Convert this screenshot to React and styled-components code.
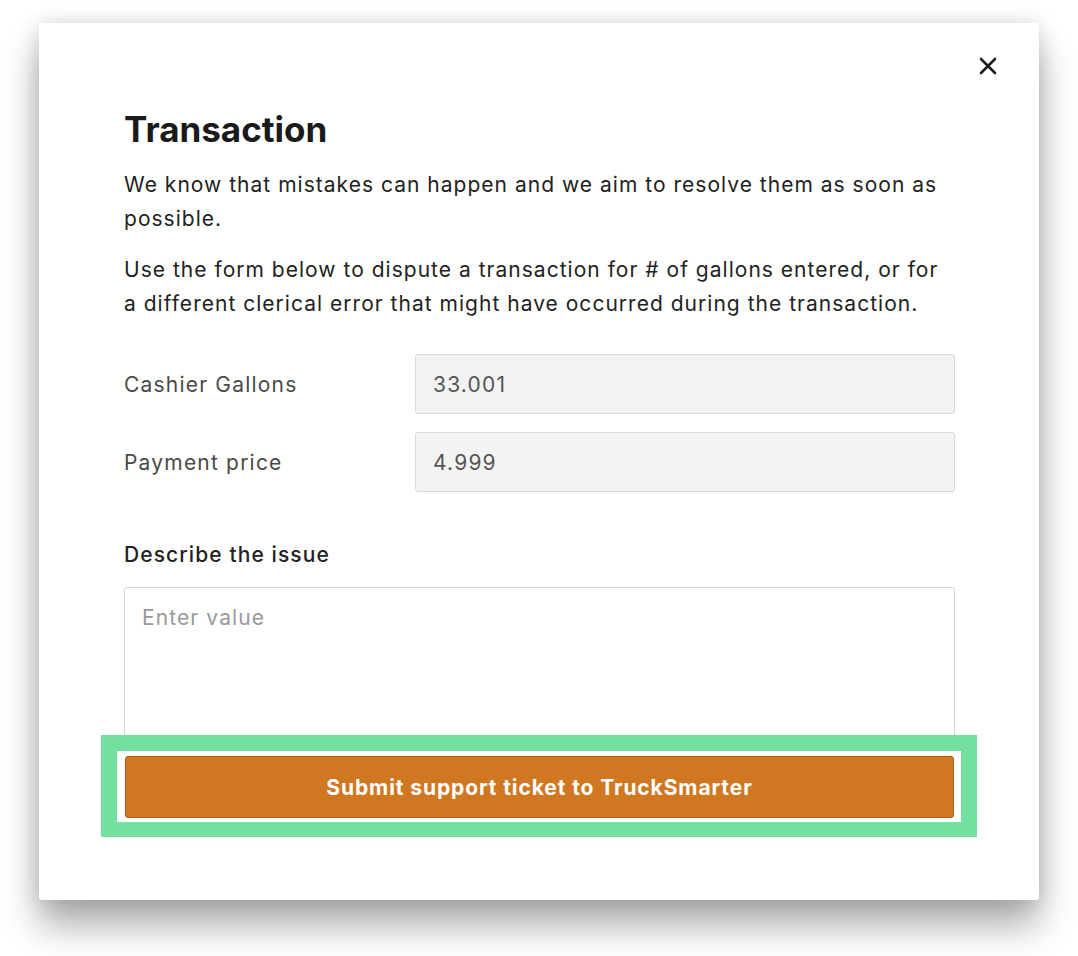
import React from "react";
import styled, { createGlobalStyle } from "styled-components";

const GlobalStyle = createGlobalStyle`
  html, body {
    margin: 0;
    padding: 0;
    background: #ffffff;
  }
  body {
    font-family: Inter, "Noto Sans", sans-serif;
    -webkit-font-smoothing: antialiased;
  }
`;

const App = () => {
  return (
    <>
      <GlobalStyle />
      <Page>
        <Modal>
          <CloseButton aria-label="Close">
            <svg width="20" height="20" viewBox="0 0 20 20">
              <path
                d="M3 3 L17 17 M17 3 L3 17"
                stroke="#1c1c1c"
                strokeWidth="2.6"
                strokeLinecap="round"
              />
            </svg>
          </CloseButton>

          <Title>Transaction</Title>
          <Paragraph>
            We know that mistakes can happen and we aim to resolve them as soon
            as possible.
          </Paragraph>
          <Paragraph>
            Use the form below to dispute a transaction for # of gallons
            entered, or for a different clerical error that might have occurred
            during the transaction.
          </Paragraph>

          <Fields>
            <FieldRow>
              <FieldLabel>Cashier Gallons</FieldLabel>
              <ReadOnlyInput value="33.001" readOnly />
            </FieldRow>
            <FieldRow>
              <FieldLabel>Payment price</FieldLabel>
              <ReadOnlyInput value="4.999" readOnly />
            </FieldRow>
          </Fields>

          <IssueLabel>Describe the issue</IssueLabel>
          <IssueInput placeholder="Enter value" />

          {/* green annotation around the submit button */}
          <Highlight>
            <SubmitButton>Submit support ticket to TruckSmarter</SubmitButton>
          </Highlight>
        </Modal>
      </Page>
    </>
  );
};

// Styled Components
const Page = styled.div`
  width: 1078px;
  height: 956px;
  padding: 23px 0 0 39px;
  box-sizing: border-box;
  overflow: hidden;
`;

const Modal = styled.div`
  position: relative;
  width: 1000px;
  height: 877px;
  box-sizing: border-box;
  padding: 86px 84px 0 85px;
  background: #ffffff;
  border-radius: 3px;
  box-shadow: 0 26px 36px rgba(0, 0, 0, 0.32), 0 0 22px rgba(0, 0, 0, 0.14);
  display: flex;
  flex-direction: column;
`;

const CloseButton = styled.button`
  position: absolute;
  top: 33px;
  right: 41px;
  width: 20px;
  height: 20px;
  padding: 0;
  border: none;
  background: none;
  display: flex;
`;

const Title = styled.h1`
  margin: 0 0 19px;
  font-size: 35px;
  line-height: 40px;
  font-weight: 700;
  color: #1a1a1a;
`;

const Paragraph = styled.p`
  margin: 0 0 17px;
  font-size: 21px;
  line-height: 34px;
  letter-spacing: 1.02px;
  color: #222222;
`;

const Fields = styled.div`
  display: flex;
  flex-direction: column;
  gap: 18px;
  margin-top: 16px;
`;

const FieldRow = styled.div`
  display: grid;
  grid-template-columns: 291px 1fr;
  align-items: center;
`;

const FieldLabel = styled.label`
  font-size: 21px;
  letter-spacing: 1.2px;
  color: #4a4a4a;
`;

const ReadOnlyInput = styled.input`
  height: 60px;
  box-sizing: border-box;
  padding: 0 17px;
  border: 1.5px solid #d9d9d9;
  border-radius: 3px;
  background: #f3f3f3;
  font-family: inherit;
  font-size: 21px;
  letter-spacing: 1.2px;
  color: #555555;
  outline: none;
`;

const IssueLabel = styled.div`
  margin-top: 50px;
  font-size: 21px;
  font-weight: 500;
  letter-spacing: 1.1px;
  color: #222222;
`;

const IssueInput = styled.textarea`
  margin-top: 20px;
  height: 160px;
  box-sizing: border-box;
  padding: 17px 17px;
  border: 1.5px solid #d4d4d4;
  border-radius: 3px;
  background: #ffffff;
  font-family: inherit;
  font-size: 21px;
  letter-spacing: 1.1px;
  resize: none;
  outline: none;

  &::placeholder {
    color: #9a9a9a;
  }
`;

const Highlight = styled.div`
  position: relative;
  margin: -12px -22px 0 -23px;
  padding: 5px 7px 4px 8px;
  border: 16px solid #74e0a0;
  border-bottom-width: 15px;
  background: #ffffff;
`;

const SubmitButton = styled.button`
  width: 100%;
  height: 62px;
  border: 1.5px solid #b25a14;
  border-radius: 3px;
  background: #d07722;
  color: #ffffff;
  font-family: inherit;
  font-size: 21px;
  font-weight: 700;
  letter-spacing: 0.9px;
  cursor: pointer;
`;

export default App;
